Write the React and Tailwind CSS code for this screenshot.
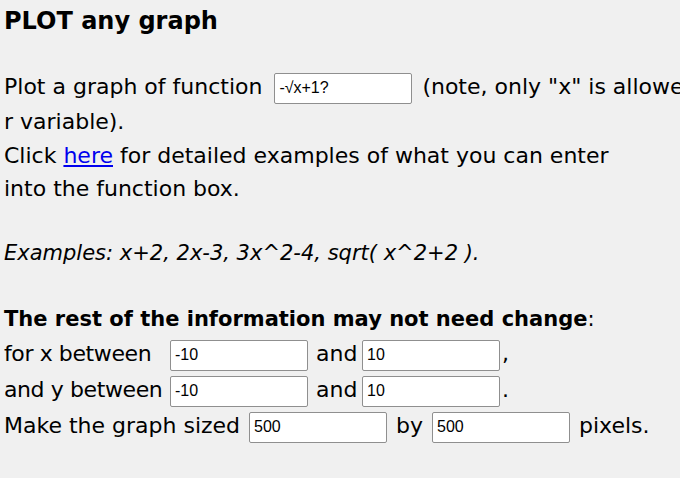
import { useState } from "react";

const font = "[font-family:'Comic_Sans_MS','DejaVu_Sans',sans-serif]";

function Field({ value, onChange, className = "mx-[2px]" }) {
  return (
    <input
      value={value}
      onChange={(e) => onChange(e.target.value)}
      className={`w-[138px] h-[31px] ${className} px-[4px] bg-white border border-[#8f8f8f] rounded-[2px] text-[16px] text-black align-middle [font-family:'Liberation_Sans',Arial,sans-serif]`}
    />
  );
}

export default function App() {
  const [fn, setFn] = useState("-√x+1?");
  const [x1, setX1] = useState("-10");
  const [x2, setX2] = useState("10");
  const [y1, setY1] = useState("-10");
  const [y2, setY2] = useState("10");
  const [w, setW] = useState("500");
  const [h, setH] = useState("500");

  return (
    <div className={`w-[680px] h-[478px] overflow-hidden bg-[#f0f0f0] text-black ${font} pl-[4px]`}>
      <h1 className="text-[24px] font-bold leading-[42px]">PLOT any graph</h1>

      <div className="mt-[27px] text-[22px]">
        <div className="h-[36px] leading-[36px] whitespace-nowrap overflow-hidden">
          Plot a graph of function <Field value={fn} onChange={setFn} className="ml-[5px] mr-[3px]" /> (note, only "x" is allowe
        </div>
        <div className="leading-[34px]">r variable).</div>
        <div className="leading-[33px]">
          Click <a href="#" className="text-[#0000ee] underline">here</a> for detailed examples of what you can enter
        </div>
        <div className="leading-[33px]">into the function box.</div>
        <div className="h-[32px]" />
        <div className="leading-[33px] italic text-[21px]">Examples: x+2, 2x-3, 3x^2-4, sqrt( x^2+2 ).</div>
        <div className="h-[33px]" />
        <div className="leading-[33px] text-[21px]"><b>The rest of the information may not need change</b>:</div>
        <div className="h-[36px] leading-[36px] whitespace-nowrap">
          <span className="inline-block w-[164px] tracking-[-0.4px]">for x between</span>
          <Field value={x1} onChange={setX1} />
          <span className="inline-block w-[50px] pl-[6px]">and</span>
          <Field value={x2} onChange={setX2} />,
        </div>
        <div className="h-[36px] leading-[36px] whitespace-nowrap">
          <span className="inline-block w-[164px] tracking-[-0.4px]">and y between</span>
          <Field value={y1} onChange={setY1} />
          <span className="inline-block w-[50px] pl-[6px]">and</span>
          <Field value={y2} onChange={setY2} />.
        </div>
        <div className="h-[36px] leading-[36px] whitespace-nowrap">
          Make the graph sized <Field value={w} onChange={setW} /> by <Field value={h} onChange={setH} /> pixels.
        </div>
      </div>
    </div>
  );
}
